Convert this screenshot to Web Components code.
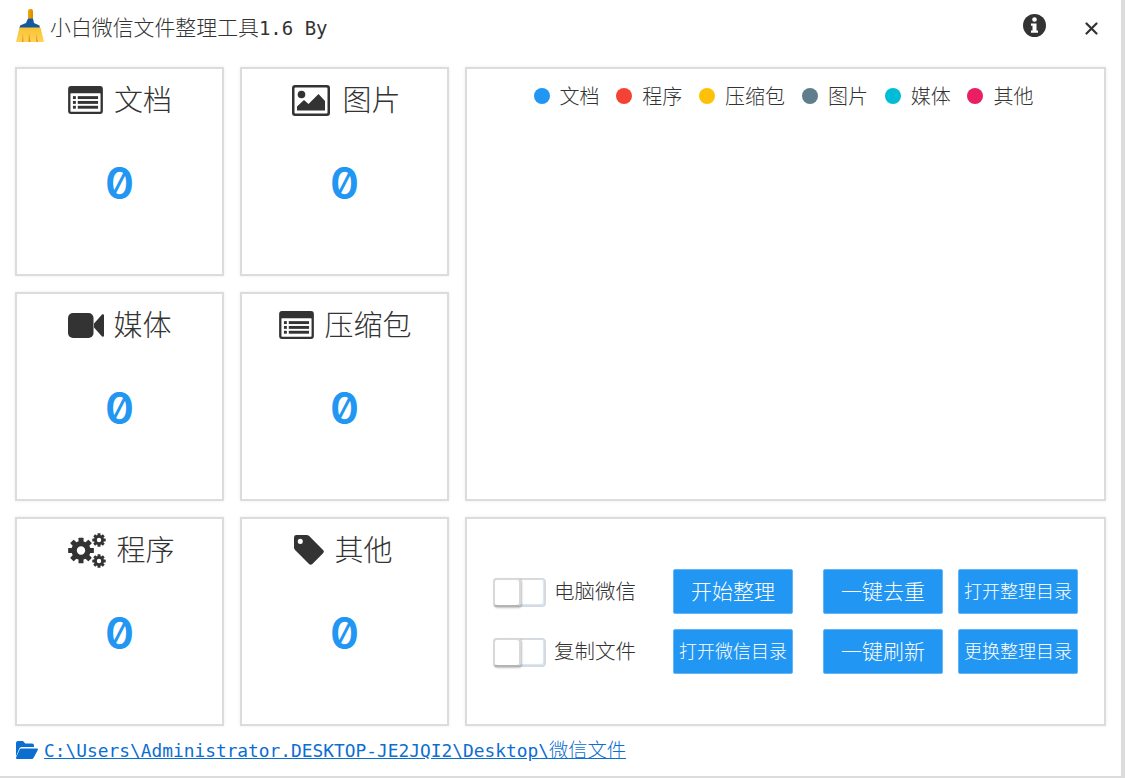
<!DOCTYPE html>
<html lang="zh">
<head>
<meta charset="utf-8">
<title>小白微信文件整理工具</title>
<style>
  html, body { margin: 0; padding: 0; background: #fff; height: 100%; overflow: hidden; }
  body { font-family: "Noto Sans CJK SC", sans-serif; color: #333; }
</style>
</head>
<body>
<tool-window>
  <stat-card label="文档" icon="list" gap="11" pad="1"></stat-card>
  <stat-card label="图片" icon="picture" gap="12" pad="4"></stat-card>
  <legend-panel></legend-panel>
  <stat-card label="媒体" icon="video" gap="9" pad="1"></stat-card>
  <stat-card label="压缩包" icon="list" gap="10" pad="2"></stat-card>
  <stat-card label="程序" icon="cogs" gap="10" pad="4"></stat-card>
  <stat-card label="其他" icon="tag" gap="10" pad="-2"></stat-card>
  <action-panel></action-panel>
</tool-window>

<script>
const cog = (cx, cy, r, hole, teeth, w) => {
    let t = '';
    for (let i = 0; i < teeth; i++) {
        t += `<rect x="${cx - w / 2}" y="${cy - r * 1.34}" width="${w}" height="${r * 0.6}" rx="0.5" transform="rotate(${i * 360 / teeth} ${cx} ${cy})"/>`;
    }
    return `${t}<path fill-rule="evenodd" d="M${cx - r} ${cy}a${r} ${r} 0 1 0 ${r * 2} 0a${r} ${r} 0 1 0 ${-r * 2} 0zM${cx - hole} ${cy}a${hole} ${hole} 0 1 1 ${hole * 2} 0a${hole} ${hole} 0 1 1 ${-hole * 2} 0z"/>`;
};

const ICONS = {
    list: `<svg width="35" height="28" viewBox="0 0 36 29" fill="#333"><path fill-rule="evenodd" d="M3 0h30a3 3 0 0 1 3 3v23a3 3 0 0 1-3 3H3a3 3 0 0 1-3-3V3a3 3 0 0 1 3-3zM3 7.500a.6.6 0 0 0-.6.6V26a.6.6 0 0 0 .6.6h30a.6.6 0 0 0 .6-.6V8.100a.6.6 0 0 0-.6-.6z"/><rect x="5" y="10.500" width="3" height="3"/><rect x="5" y="15.500" width="3" height="3"/><rect x="5" y="20.500" width="3" height="3"/><rect x="10" y="10.500" width="21" height="3"/><rect x="10" y="15.500" width="21" height="3"/><rect x="10" y="20.500" width="21" height="3"/></svg>`,
    picture: `<svg width="38" height="31" viewBox="0 0 38 31" fill="#333"><path fill-rule="evenodd" d="M3 0h32a3 3 0 0 1 3 3v25a3 3 0 0 1-3 3H3a3 3 0 0 1-3-3V3a3 3 0 0 1 3-3zM3.500 2.500a1 1 0 0 0-1 1v24a1 1 0 0 0 1 1h31a1 1 0 0 0 1-1v-24a1 1 0 0 0-1-1z"/><circle cx="9.500" cy="9.500" r="3.800"/><path d="M5 25.500v-4l7-6.500 4.500 4 10-10L33 16v9.500z"/></svg>`,
    video: `<svg width="36" height="25" viewBox="0 0 36 25" fill="#333"><rect x="0" y="0" width="25.500" height="25" rx="5"/><path d="M26 10.500 33.800 1.800c.8-.9 2.200-.4 2.200.8v19.800c0 1.200-1.400 1.700-2.200.8L26 14.500z"/></svg>`,
    cogs: `<svg width="38" height="35" viewBox="0 0 38 35" fill="#333">${cog(13, 17.500, 9.600, 4.200, 8, 5)}${cog(31, 7, 5, 2.200, 8, 3)}${cog(31, 28, 5, 2.200, 8, 3)}</svg>`,
    tag: `<svg width="30" height="30" viewBox="0 0 31 31" fill="#333"><path fill-rule="evenodd" d="M2.500 0H13c1 0 2 .4 2.700 1.100L30 15.400a2.500 2.500 0 0 1 0 3.500L19 30a2.500 2.500 0 0 1-3.500 0L1.100 15.600A3.800 3.800 0 0 1 0 13V2.500A2.500 2.500 0 0 1 2.500 0zM6.500 4a2.600 2.600 0 1 0 0 5.200a2.600 2.600 0 0 0 0-5.200z"/></svg>`
};

class ToolWindow extends HTMLElement {
    constructor() {
        super();
        this.attachShadow({ mode: 'open' });
        this.shadowRoot.innerHTML = `
            <style>
                :host {
                    display: flex;
                    flex-direction: column;
                    box-sizing: border-box;
                    width: 1125px;
                    height: 778px;
                    border-right: 4px solid #dcdcdc;
                    border-bottom: 2px solid #dcdcdc;
                    position: relative;
                }
                header {
                    display: flex;
                    align-items: center;
                    height: 67px;
                    padding: 0 0 15px 16px;
                    box-sizing: border-box;
                }
                .title {
                    margin-left: 6px;
                    font-size: 20.900px;
                    font-weight: 300;
                    color: #333;
                    white-space: nowrap;
                }
                .mono { font-family: "DejaVu Sans Mono", monospace; font-size: 19px; font-weight: 400; }
                .tools { margin-left: auto; display: flex; align-items: flex-start; align-self: flex-start; padding-top: 14px; margin-right: 23px; }
                .tools svg { display: block; }
                .close { margin-left: 39.500px; margin-top: 8px; }
                .grid {
                    display: grid;
                    grid-template-columns: 210px 210px 642px;
                    grid-template-rows: repeat(3, 210px);
                    gap: 15px;
                    padding-left: 15px;
                }
                footer {
                    display: flex;
                    align-items: center;
                    margin-top: 9px;
                    padding-left: 16px;
                    height: 26px;
                    color: #0b6ed1;
                }
                footer svg { margin-right: 6px; margin-top: 2px; flex: none; }
                a { color: inherit; font-family: "DejaVu Sans Mono", "Noto Sans CJK SC", monospace; font-size: 17.850px; font-weight: 300; white-space: nowrap; }
                a .cn { font-family: "Noto Sans CJK SC", sans-serif; font-size: 19.250px; }
            </style>
            <header>
                <svg width="28" height="34" viewBox="0 0 28 34">
                    <defs>
                        <linearGradient id="h" x1="0" x2="1"><stop offset="0" stop-color="#f0a800"/><stop offset="1" stop-color="#d98a00"/></linearGradient>
                        <linearGradient id="b" x1="0" x2="0" y1="0" y2="1"><stop offset="0" stop-color="#f8c333"/><stop offset="1" stop-color="#ffd257"/></linearGradient>
                    </defs>
                    <rect x="12" y="0" width="5" height="11" rx="2.200" fill="url(#h)"/>
                    <path d="M12 9.500h5l1 4.500 5.500 2.500.5 3H3.500l.5-3L10 14z" fill="#14589f"/>
                    <path d="M3.500 18.500h21L28 33H0z" fill="url(#b)"/>
                    <path d="M7 24l-1 9h1.500zM13 24l-.5 9h2zM20 24l.5 9h1.500z" fill="#e09a10"/>
                </svg>
                <span class="title">小白微信文件整理工具<span class="mono">1.6 By</span></span>
                <div class="tools">
                    <svg width="23" height="23" viewBox="0 0 23 23"><circle cx="11.500" cy="11.500" r="11.500" fill="#333"/><circle cx="11.500" cy="5.500" r="2.300" fill="#fff"/><path d="M8 9.500h5.500v7H15v2.300H8v-2.300h1.500V11.800H8z" fill="#fff"/></svg>
                    <svg class="close" width="13" height="13" viewBox="0 0 13 13"><path d="M1.500 1.500l10 10M11.500 1.500l-10 10" stroke="#333" stroke-width="2.200" stroke-linecap="round"/></svg>
                </div>
            </header>
            <div class="grid"><slot></slot></div>
            <footer>
                <svg width="22" height="18" viewBox="0 0 22 18" fill="#0b6ed1"><path d="M0 15.500V2a2 2 0 0 1 2-2h5l2.300 2.500H16a2 2 0 0 1 2 2V6H6c-1.300 0-2.200.6-2.800 1.700z"/><path d="M5 7.500h16c.8 0 1.200.8.800 1.500l-4.300 8c-.3.600-.9 1-1.600 1H1c-.8 0-1.300-.9-.9-1.600l3.500-8C3.900 7.800 4.400 7.500 5 7.500z"/></svg>
                <a href="#">C:\\Users\\Administrator.DESKTOP-JE2JQI2\\Desktop\\<span class="cn">微信文件</span></a>
            </footer>
        `;
    }
}

class StatCard extends HTMLElement {
    constructor() {
        super();
        this.attachShadow({ mode: 'open' });
    }

    connectedCallback() {
        const label = this.getAttribute('label') || '';
        const icon = ICONS[this.getAttribute('icon')] || '';
        const gap = this.getAttribute('gap') || 12;
        const pad = Number(this.getAttribute('pad') || 0);
        this.shadowRoot.innerHTML = `
            <style>
                :host {
                    display: flex;
                    flex-direction: column;
                    align-items: center;
                    box-sizing: border-box;
                    width: 209px;
                    height: 209px;
                    border: 2px solid #dcdcdc;
                    box-shadow: 0 0 3px rgba(0, 0, 0, .08);
                    background: #fff;
                }
                .head {
                    display: flex;
                    align-items: center;
                    justify-content: center;
                    gap: ${gap}px;
                    height: 62px;
                    padding: 0 ${pad < 0 ? -pad : 0}px 0 ${pad > 0 ? pad : 0}px;
                    font-size: 29px;
                    font-weight: 300;
                    color: #333;
                }
                .head svg { display: block; flex: none; }
                .head span { position: relative; top: -2px; }
                .count {
                    margin-top: 27px;
                    font-family: Inter, "DejaVu Sans Mono", monospace;
                    font-variant-numeric: slashed-zero;
                    font-feature-settings: "zero" 1;
                    font-weight: 600;
                    font-size: 44px;
                    line-height: 50px;
                    color: #2196f3;
                }
            </style>
            <div class="head">${icon}<span>${label}</span></div>
            <div class="count">0</div>
        `;
    }
}

class LegendPanel extends HTMLElement {
    constructor() {
        super();
        this.attachShadow({ mode: 'open' });
        const items = [
            ['文档', '#2196f3'], ['程序', '#f44336'], ['压缩包', '#ffc107'],
            ['图片', '#607d8b'], ['媒体', '#00bcd4'], ['其他', '#e91e63']
        ];
        this.shadowRoot.innerHTML = `
            <style>
                :host {
                    grid-row: span 2;
                    display: flex;
                    justify-content: center;
                    align-self: start;
                    box-sizing: border-box;
                    width: 641px;
                    height: 434px;
                    border: 2px solid #dcdcdc;
                    box-shadow: 0 0 3px rgba(0, 0, 0, .08);
                    padding: 11px 4px 0 0;
                    gap: 16.800px;
                    font-size: 20px;
                    font-weight: 300;
                    color: #333;
                }
                div { display: flex; align-items: center; gap: 10px; height: 30px; }
                i { width: 16px; height: 16px; border-radius: 50%; display: block; margin-top: 1px; }
            </style>
            ${items.map(i => `<div><i style="background:${i[1]}"></i><span>${i[0]}</span></div>`).join('')}
        `;
    }
}

class ToggleSwitch extends HTMLElement {
    constructor() {
        super();
        this.attachShadow({ mode: 'open' });
        this.shadowRoot.innerHTML = `
            <style>
                :host { display: flex; align-items: center; gap: 8px; font-size: 20.500px; font-weight: 300; color: #333; }
                .track {
                    position: relative;
                    box-sizing: border-box;
                    width: 53px;
                    height: 29px;
                    margin-top: 1px;
                    border: 2px solid #d5dbe0;
                    border-radius: 4px;
                    box-shadow: inset -1px -1px 1px #d4e6f5;
                }
                .knob {
                    position: absolute;
                    left: -2px;
                    top: -2px;
                    width: 28px;
                    height: 29px;
                    box-sizing: border-box;
                    border-radius: 4px;
                    border: 2px solid #d9d9d9;
                    border-bottom-color: #b4b4b4;
                    background: #fff;
                    box-shadow: 1px 1px 2px rgba(0, 0, 0, .25);
                }
                span { padding-bottom: 4px; }
            </style>
            <div class="track"><div class="knob"></div></div>
            <span><slot></slot></span>
        `;
    }
}

class BlueButton extends HTMLElement {
    constructor() {
        super();
        this.attachShadow({ mode: 'open' });
        this.shadowRoot.innerHTML = `
            <style>
                :host {
                    display: flex;
                    align-items: center;
                    justify-content: center;
                    box-sizing: border-box;
                    width: 120px;
                    height: 45px;
                    padding-bottom: 4px;
                    border-radius: 2px;
                    border: 1px solid #64b5f6;
                    background: #2196f3;
                    color: #fff;
                    font-size: 21px;
                    font-weight: 300;
                    white-space: nowrap;
                }
                :host([small]) { font-size: 18px; }
            </style>
            <slot></slot>
        `;
    }
}

class ActionPanel extends HTMLElement {
    constructor() {
        super();
        this.attachShadow({ mode: 'open' });
        this.shadowRoot.innerHTML = `
            <style>
                :host {
                    display: grid;
                    grid-template-columns: 180px 150px 135px 120px;
                    grid-template-rows: 45px 45px;
                    row-gap: 15px;
                    align-content: center;
                    align-self: start;
                    box-sizing: border-box;
                    width: 641px;
                    height: 209px;
                    border: 2px solid #dcdcdc;
                    box-shadow: 0 0 3px rgba(0, 0, 0, .08);
                    padding-left: 26px;
                }
            </style>
            <toggle-switch>电脑微信</toggle-switch>
            <blue-button>开始整理</blue-button>
            <blue-button>一键去重</blue-button>
            <blue-button small>打开整理目录</blue-button>
            <toggle-switch>复制文件</toggle-switch>
            <blue-button small>打开微信目录</blue-button>
            <blue-button>一键刷新</blue-button>
            <blue-button small>更换整理目录</blue-button>
        `;
    }
}

customElements.define('tool-window', ToolWindow);
customElements.define('stat-card', StatCard);
customElements.define('legend-panel', LegendPanel);
customElements.define('toggle-switch', ToggleSwitch);
customElements.define('blue-button', BlueButton);
customElements.define('action-panel', ActionPanel);
</script>
</body>
</html>
